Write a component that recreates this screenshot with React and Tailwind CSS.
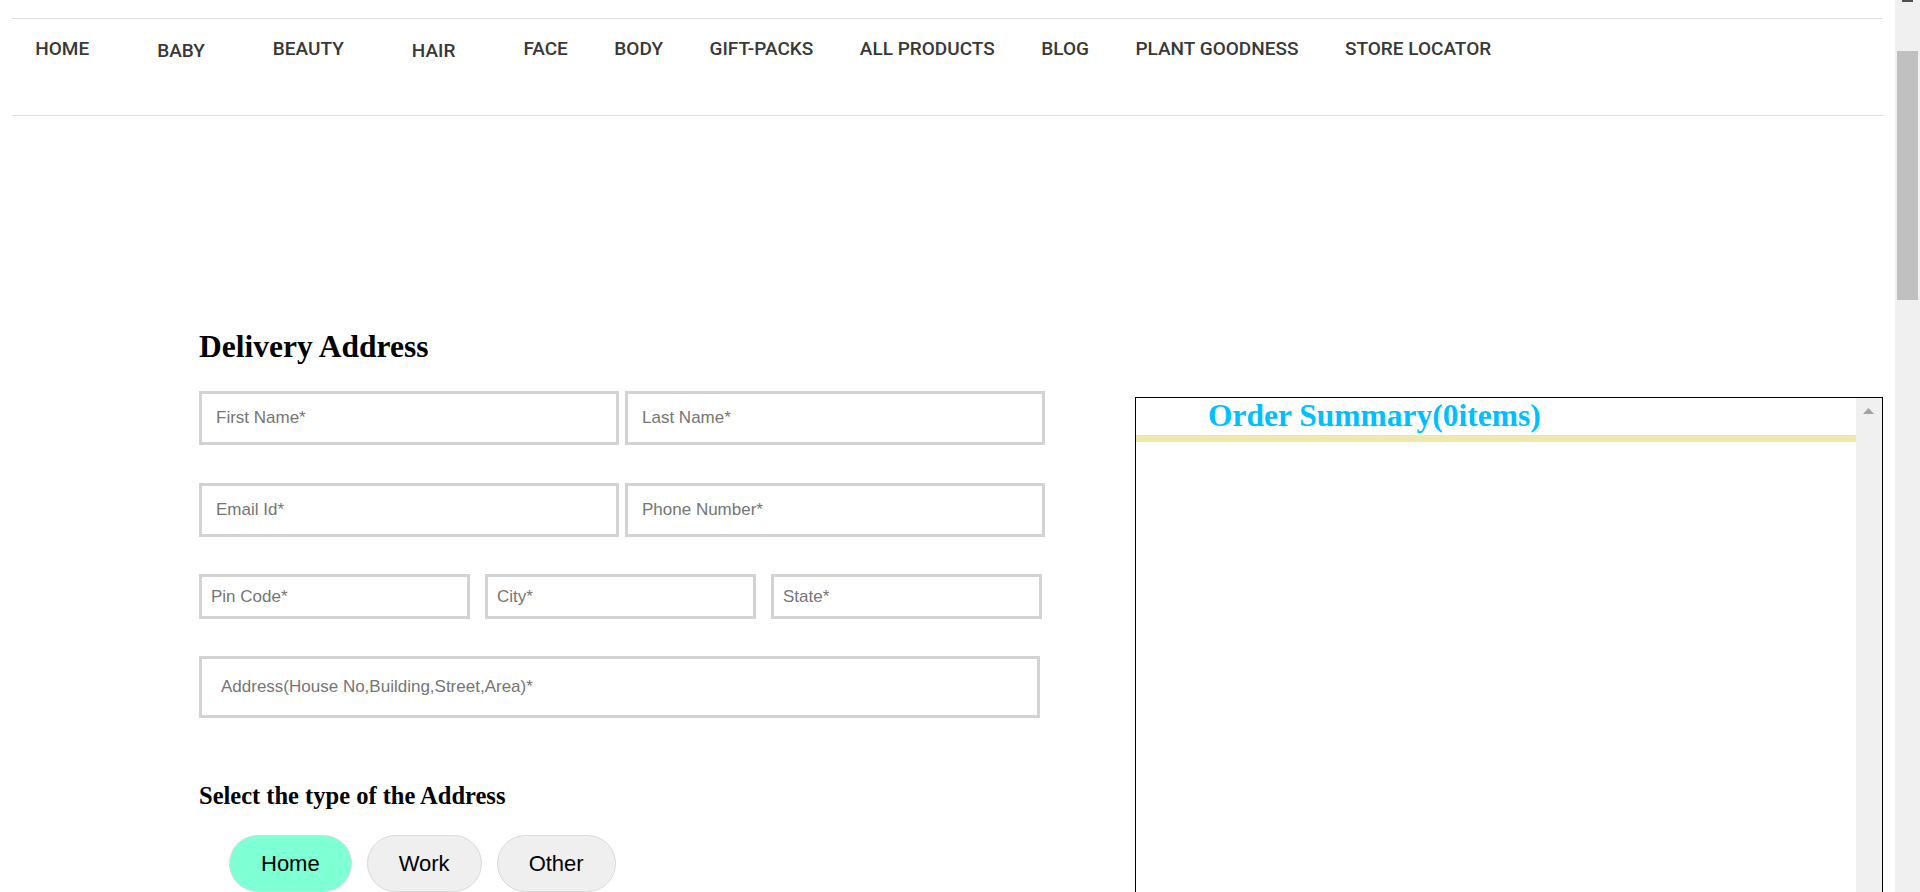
import React from "react";

const navItems = [
  { label: "HOME", extra: "mr-[21.5px]" },
  { label: "BABY", extra: "mr-[21.5px] mt-[2px]" },
  { label: "BEAUTY", extra: "mr-[21.5px]" },
  { label: "HAIR", extra: "mr-[21.5px] mt-[2px]" },
  { label: "FACE", extra: "" },
  { label: "BODY", extra: "" },
  { label: "GIFT-PACKS", extra: "" },
  { label: "ALL PRODUCTS", extra: "" },
  { label: "BLOG", extra: "" },
  { label: "PLANT GOODNESS", extra: "" },
  { label: "STORE LOCATOR", extra: "" },
];

const inputCls =
  "box-border h-full w-full border-[3px] border-solid border-[#d3d3d3] bg-white text-[17px] text-black outline-none placeholder:text-[#757575] font-['Liberation_Sans',Arial,sans-serif]";

export default function App() {
  return (
    <div className="flex h-[892px] w-[1920px] overflow-hidden bg-white">
      <div className="min-w-0 flex-1">
        <nav className="mx-[12px] mt-[18px] box-border h-[98px] border-y border-[#dddddd] pt-[19px]">
          <ul className="flex items-start font-['Roboto',sans-serif] text-[19px] font-medium leading-[22px] text-[#383838]">
            {navItems.map((it) => (
              <li key={it.label} className={`whitespace-nowrap px-[23.25px] ${it.extra}`}>
                {it.label}
              </li>
            ))}
          </ul>
        </nav>

        <main className="flex items-start pl-[199px] pt-[213px]">
          <section className="w-[847px] shrink-0">
            <h2 className="font-['Liberation_Serif','Times_New_Roman',serif] text-[31.5px] font-bold leading-[36px] text-black">
              Delivery Address
            </h2>

            <div className="mt-[26px] flex h-[54px] gap-[6px]">
              <div className="w-[420px]">
                <input className={`${inputCls} pl-[14px]`} placeholder="First Name*" />
              </div>
              <div className="w-[420px]">
                <input className={`${inputCls} pl-[14px]`} placeholder="Last Name*" />
              </div>
            </div>

            <div className="mt-[38px] flex h-[54px] gap-[6px]">
              <div className="w-[420px]">
                <input className={`${inputCls} pl-[14px]`} placeholder="Email Id*" />
              </div>
              <div className="w-[420px]">
                <input className={`${inputCls} pl-[14px]`} placeholder="Phone Number*" />
              </div>
            </div>

            <div className="mt-[37px] flex h-[45px] gap-[15px]">
              <div className="w-[271px]">
                <input className={`${inputCls} pl-[9px]`} placeholder="Pin Code*" />
              </div>
              <div className="w-[271px]">
                <input className={`${inputCls} pl-[9px]`} placeholder="City*" />
              </div>
              <div className="w-[271px]">
                <input className={`${inputCls} pl-[9px]`} placeholder="State*" />
              </div>
            </div>

            <div className="mt-[37px] h-[62px] w-[841px]">
              <input
                className={`${inputCls} pl-[19px]`}
                placeholder="Address(House No,Building,Street,Area)*"
              />
            </div>

            <h3 className="mt-[64px] font-['Liberation_Serif','Times_New_Roman',serif] text-[24.5px] font-bold leading-[28px] text-black">
              Select the type of the Address
            </h3>

            <div className="mt-[25px] flex gap-[15px] pl-[30px] font-['Liberation_Sans',Arial,sans-serif] text-[22px] leading-[25px] text-black">
              <button className="box-border h-[57px] rounded-full border border-[#d9d9d9] bg-[#7fffd4] px-[31px]">
                Home
              </button>
              <button className="box-border h-[57px] rounded-full border border-[#d9d9d9] bg-[#efefef] px-[31px]">
                Work
              </button>
              <button className="box-border h-[57px] rounded-full border border-[#d9d9d9] bg-[#efefef] px-[31px]">
                Other
              </button>
            </div>
          </section>

          <aside className="ml-[89px] mt-[68px] box-border flex h-[600px] w-[748px] shrink-0 border border-black">
            <div className="min-w-0 flex-1">
              <h2 className="box-border h-[44px] border-b-[7px] border-[#eee8aa] pl-[72px] pt-[1px] font-['Liberation_Serif','Times_New_Roman',serif] text-[31.5px] font-bold leading-[34px] text-[#00bfff]">
                Order Summary(0items)
              </h2>
            </div>
            <div className="w-[26px] shrink-0 bg-[#f0f0f0] pl-[7px] pt-[10px]">
              <svg width="11" height="6" viewBox="0 0 11 6" className="block">
                <polygon points="5.5,0 11,6 0,6" fill="#a3a3a3" />
              </svg>
            </div>
          </aside>
        </main>
      </div>

      <div className="w-[25px] shrink-0 bg-[#f0f0f0]">
        <div className="ml-[7px] h-[2px] w-[11px] bg-[#505050]" />
        <div className="ml-[2px] mt-[49px] h-[249px] w-[21px] bg-[#c0c0c0]" />
      </div>
    </div>
  );
}
